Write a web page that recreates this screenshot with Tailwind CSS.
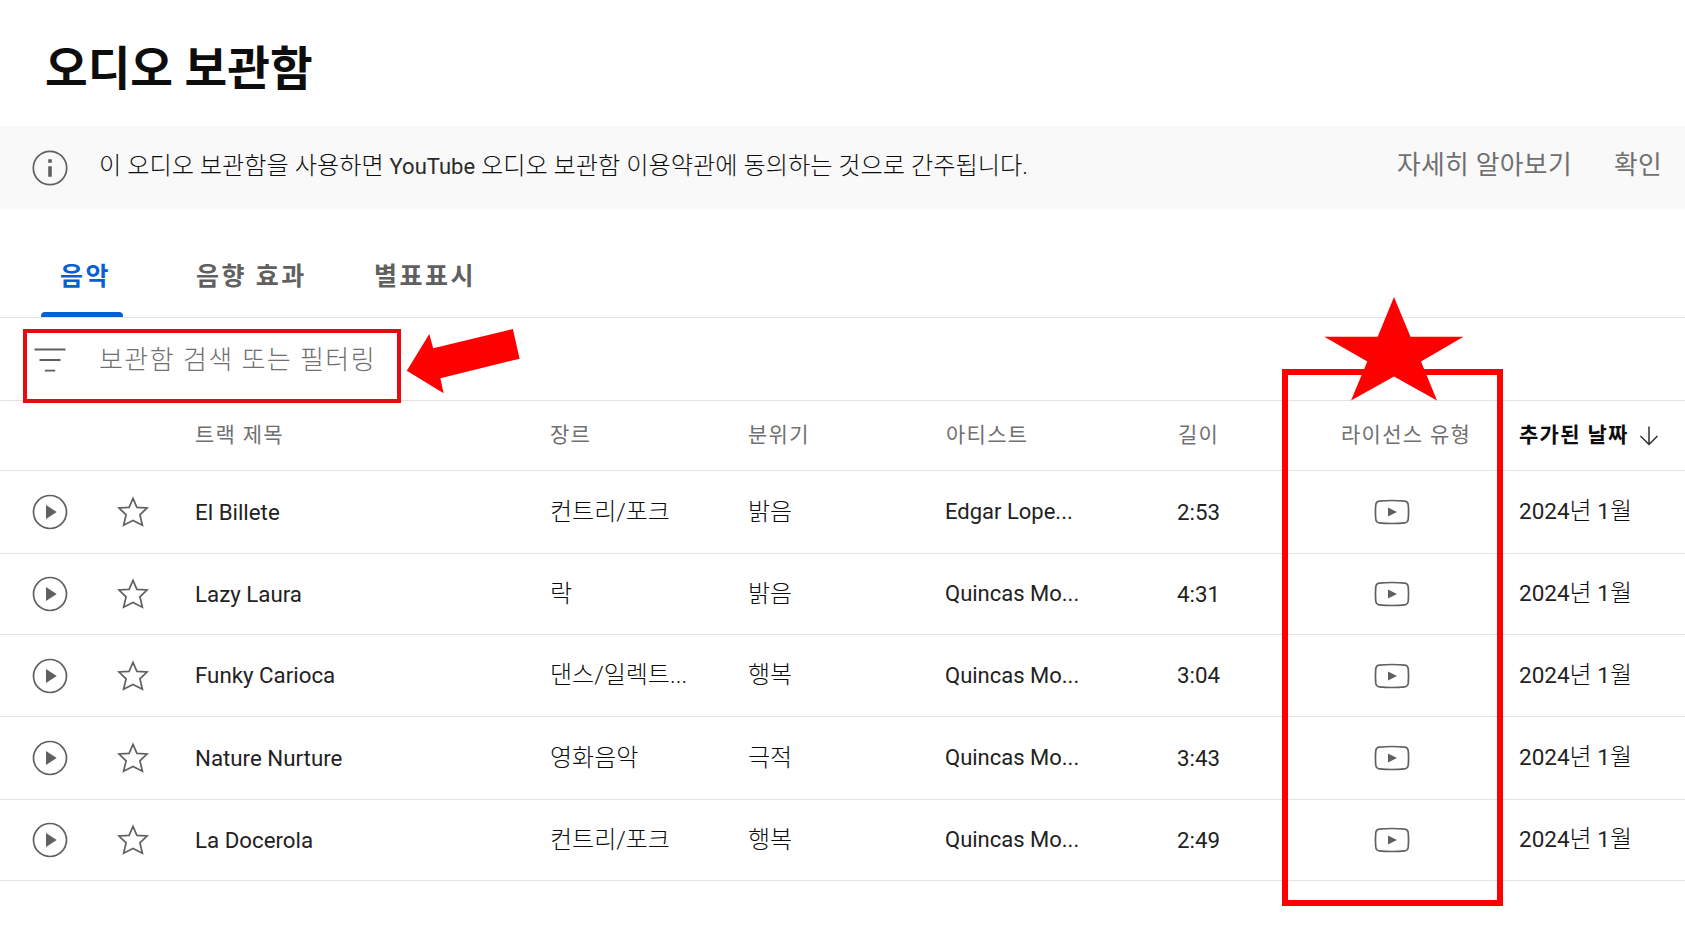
<!DOCTYPE html>
<html lang="ko">
<head>
    <meta charset="UTF-8">
    <meta name="viewport" content="width=device-width, initial-scale=1.0">
    <title>오디오 보관함</title>
    <script src="https://cdn.jsdelivr.net/npm/@tailwindcss/browser@4"></script>
</head>
<body class="relative h-[926px] w-[1685px] overflow-hidden bg-white font-['Roboto','Noto_Sans_CJK_KR',sans-serif] text-[#0d0d0d]">
    <!-- 아이콘 -->
    <svg class="hidden">
        <symbol id="icon-play" viewBox="-21 -21 42 42">
            <circle r="16.5" fill="none" stroke="#606060" stroke-width="1.7"/>
            <path d="M-4 -7L6.7 0L-4 7Z" fill="#606060"/>
        </symbol>
        <symbol id="icon-star" viewBox="-21 -21 42 42">
            <path d="M0 -13.6L3.9 -4.6L14 -4L6.9 2.8L9.4 13.2L0 8.5L-9.4 13.2L-6.9 2.8L-14 -4L-3.9 -4.6Z" fill="none" stroke="#606060" stroke-width="1.7"/>
        </symbol>
        <symbol id="icon-youtube" viewBox="-21 -21 42 42">
            <path d="M-12.8 -10.8Q0 -12.2 12.8 -10.8Q16 -10.4 16.3 -6.5Q16.8 0 16.3 6.5Q16 10.4 12.8 10.8Q0 12.2 -12.8 10.8Q-16 10.4 -16.3 6.5Q-16.8 0 -16.3 -6.5Q-16 -10.4 -12.8 -10.8Z" fill="none" stroke="#606060" stroke-width="1.7"/>
            <path d="M-4 -4.5L5 0L-4 4.5Z" fill="#606060"/>
        </symbol>
    </svg>

    <!-- 제목 -->
    <header class="flex h-[126px] items-center pt-3 pl-[45px]">
        <h1 class="text-[46.4px] leading-none font-bold">오디오 보관함</h1>
    </header>

    <!-- 약관 안내 -->
    <div class="flex h-[83px] items-center bg-[#f9f9f9] pl-[29px]">
        <svg class="size-[42px] shrink-0" viewBox="-21 -21 42 42">
            <circle r="16.7" fill="none" stroke="#606060" stroke-width="1.7"/>
            <path d="M-1.8 -8.7H1.8V-5.2H-1.8ZM-1.8 -1.7H1.8V8.8H-1.8Z" fill="#606060"/>
        </svg>
        <p class="ml-[28px] pb-[2px] text-[24.2px] leading-none font-light whitespace-nowrap">이 오디오 보관함을 사용하면 <span class="text-[22px] font-normal text-[#2a2a2a]">YouTube</span> 오디오 보관함 이용약관에 동의하는 것으로 간주됩니다.</p>
        <div class="ml-auto flex gap-[42px] pr-[23px] pb-[3px] text-[25.8px] leading-none tracking-[0.3px] text-[#707070]">
            <button>자세히 알아보기</button>
            <button>확인</button>
        </div>
    </div>

    <!-- 탭 -->
    <nav class="flex h-[109px] items-end border-b border-[#e2e2e2] pl-[41px] text-[25px] leading-none font-bold tracking-[2.5px] text-[#606060]">
        <div class="flex w-[82px] flex-col items-center text-[#065fd4]">
            <span class="pb-[23px] pl-[7px]">음악</span>
            <span class="h-[5px] w-full rounded-t bg-[#065fd4]"></span>
        </div>
        <span class="ml-[73px] w-[178px] pb-[28px]">음향 효과</span>
        <span class="pb-[28px]">별표표시</span>
    </nav>

    <!-- 필터 -->
    <div class="flex h-[83px] items-center border-b border-[#e2e2e2] pt-[2px] pl-[29px]">
        <svg class="size-[42px]" viewBox="-21 -21 42 42" stroke="#606060" stroke-width="1.8">
            <path d="M-15.5 -10.5H15.5M-10.5 0H10.5M-5.2 10.7H5.2"/>
        </svg>
        <span class="ml-[28px] text-[26px] leading-none font-light tracking-[1.45px] text-[#707070]">보관함 검색 또는 필터링</span>
    </div>

    <!-- 트랙 목록 -->
    <div class="grid h-[70px] grid-cols-[195px_355px_198px_198px_232px_163px_178px_166px] items-center border-b border-[#e2e2e2] text-[21px] leading-none tracking-[1.3px] text-[#707070]">
        <span></span>
        <span>트랙 제목</span>
        <span>장르</span>
        <span>분위기</span>
        <span>아티스트</span>
        <span>길이</span>
        <span>라이선스 유형</span>
        <span class="flex items-center text-[#0d0d0d]">
            <b>추가된 날짜</b>
            <svg class="ml-[10px] mt-[1px] h-5 w-[20px]" viewBox="0 0 20 20" fill="none" stroke="#303030" stroke-width="1.5">
                <path d="M10 0.5V18.5M1.5 10L10 18.5L18.5 10"/>
            </svg>
        </span>
    </div>
    <div id="tracks"></div>

    <!-- 강조 표시 -->
    <div class="absolute top-[329px] left-[23px] h-[74px] w-[378px] border-4 border-[#e60b0e]"></div>
    <div class="absolute top-[369px] left-[1282px] h-[537px] w-[221px] border-6 border-[#ff0000]"></div>
    <svg class="absolute top-0 left-0 h-[926px] w-[1685px]" viewBox="0 0 1685 926" fill="#ff0000">
        <path d="M406.8 370.7L429.3 334L433.2 348.3L512.9 329L519.6 358.7L440.4 378.3L443.6 393.3Z"/>
        <path d="M1394 297L1410.5 336.7H1463.5L1421 361.5L1437 400.5L1394 376.5L1351 400.5L1367.3 361.5L1324.3 336.7H1377.7Z"/>
    </svg>

    <script>
        const tracks = [
            { title: 'El Billete', genre: '컨트리/포크', mood: '밝음', artist: 'Edgar Lope...', length: '2:53', height: 83 },
            { title: 'Lazy Laura', genre: '락', mood: '밝음', artist: 'Quincas Mo...', length: '4:31', height: 81 },
            { title: 'Funky Carioca', genre: '댄스/일렉트...', mood: '행복', artist: 'Quincas Mo...', length: '3:04', height: 82 },
            { title: 'Nature Nurture', genre: '영화음악', mood: '극적', artist: 'Quincas Mo...', length: '3:43', height: 83 },
            { title: 'La Docerola', genre: '컨트리/포크', mood: '행복', artist: 'Quincas Mo...', length: '2:49', height: 81 }
        ];

        // 트랙 행 출력
        document.getElementById('tracks').innerHTML = tracks.map(track => `
            <div class="grid grid-cols-[112px_83px_355px_198px_197px_197px_250px_293px] items-center border-b border-[#e2e2e2] text-[22px] leading-none whitespace-nowrap text-[#222222]" style="height: ${track.height}px">
                <svg class="ml-[29px] size-[42px]"><use href="#icon-play"/></svg>
                <svg class="size-[42px]"><use href="#icon-star"/></svg>
                <span class="text-[22.3px]">${track.title}</span>
                <span class="pb-px text-[24px] font-light text-[#0d0d0d]">${track.genre}</span>
                <span class="pb-px text-[24px] font-light text-[#0d0d0d]">${track.mood}</span>
                <span>${track.artist}</span>
                <span class="pl-[35px] text-[22.3px]">${track.length}</span>
                <span class="flex items-center">
                    <svg class="-ml-[21px] size-[42px]"><use href="#icon-youtube"/></svg>
                    <span class="ml-[106px] pb-0.5 text-[22.5px]">2024<span class="text-[24px] font-light text-[#0d0d0d]">년</span> 1<span class="text-[24px] font-light text-[#0d0d0d]">월</span></span>
                </span>
            </div>
        `).join('');
    </script>
</body>
</html>
